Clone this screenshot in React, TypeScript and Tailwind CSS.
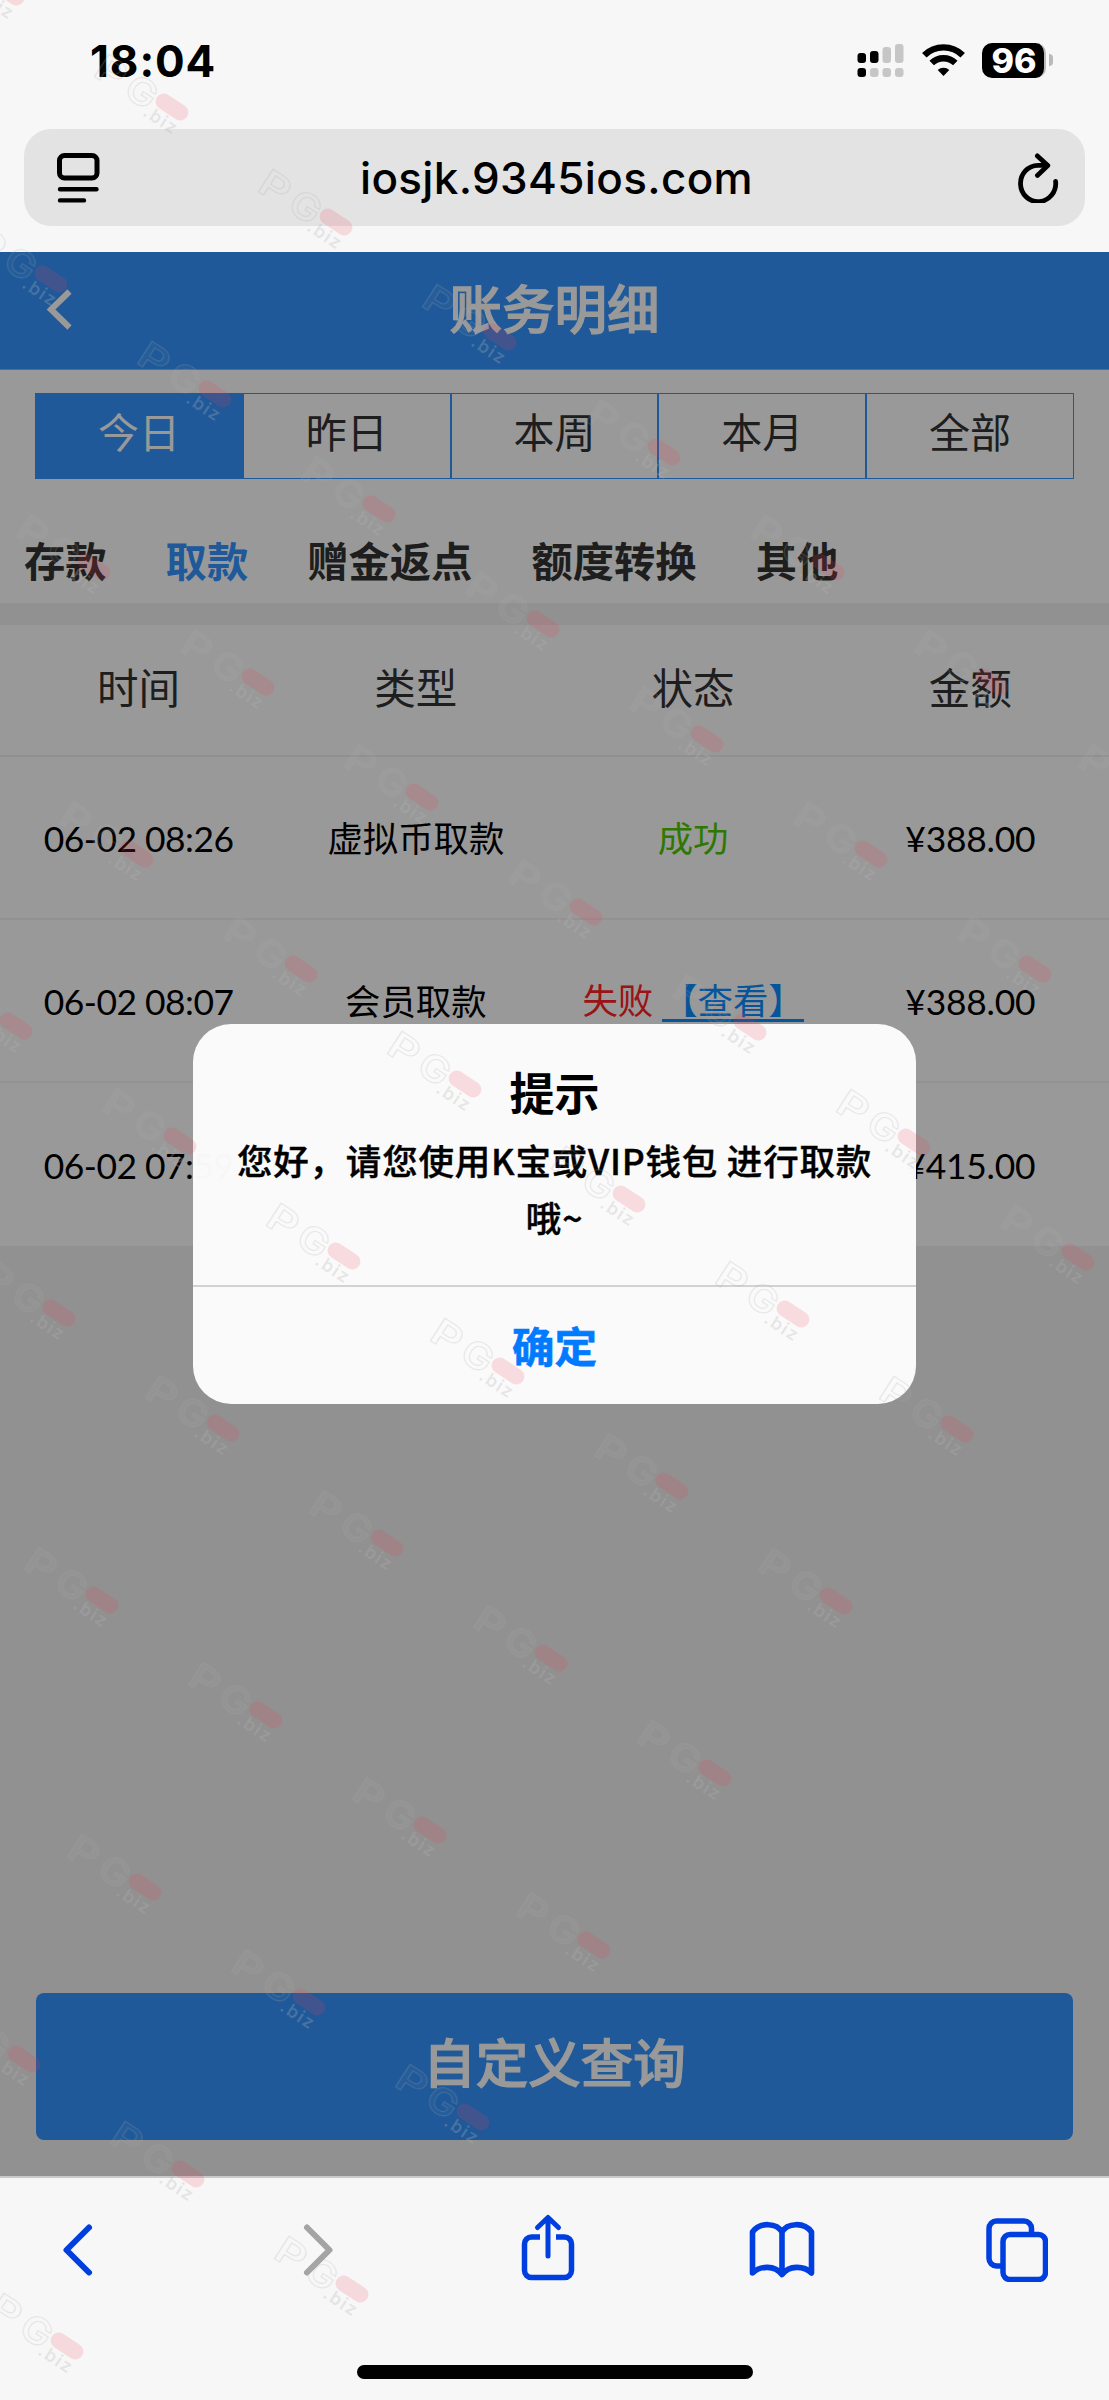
import { useState } from 'react'
import clsx from 'clsx'

const ranges = ['今日', '昨日', '本周', '本月', '全部']
const categories = ['存款', '取款', '赠金返点', '额度转换', '其他']
const columns = ['时间', '类型', '状态', '金额']

const records = [
  { time: '06-02 08:26', type: '虚拟币取款', ok: true, amount: '¥388.00' },
  { time: '06-02 08:07', type: '会员取款', ok: false, amount: '¥388.00' },
  { time: '06-02 07:59', type: '会员取款', ok: true, amount: '¥415.00' },
]

// first mark of every diagonal, and how many marks it holds
const markRows = [
  { x: 8, y: -8, count: 8 },
  { x: 51, y: 279, count: 7 },
  { x: 94, y: 567, count: 7 },
  { x: -27, y: 739, count: 7 },
  { x: 16, y: 1026, count: 6 },
  { x: 59, y: 1313, count: 5 },
  { x: 102, y: 1600, count: 4 },
  { x: -19, y: 1772, count: 4 },
  { x: 24, y: 2059, count: 3 },
  { x: 67, y: 2346, count: 1 },
]

function StatusBar() {
  return (
    <div className="flex h-[129px] items-start justify-between pl-[90px] pr-[56px] pt-[41px]">
      <span className="font-['Inter',sans-serif] text-[44px] font-bold leading-[40px] tracking-[0.9px]">18:04</span>
      <div className="flex pt-[2px]">
        <svg width="47" height="35" viewBox="0 0 47 35" className="mr-[18px]">
          <rect x="0.5" y="10" width="8.5" height="10" rx="3" />
          <rect x="13" y="8" width="8.5" height="12" rx="3" />
          <rect x="25.5" y="4" width="8.5" height="16" rx="3" fill="#c6c6c6" />
          <rect x="38" y="1" width="8.5" height="19" rx="3" fill="#c6c6c6" />
          <rect x="0.5" y="25" width="8.5" height="9" rx="3" />
          <rect x="13" y="25" width="8.5" height="9" rx="3" fill="#c6c6c6" />
          <rect x="25.5" y="25" width="8.5" height="9" rx="3" fill="#c6c6c6" />
          <rect x="38" y="25" width="8.5" height="9" rx="3" fill="#c6c6c6" />
        </svg>
        <svg width="43" height="35" viewBox="0 0 43 35" className="mr-[17px]" fill="none" stroke="#000" strokeWidth="6.4">
          <path d="M2.3 12.2a27.5 27.5 0 0 1 38.4 0" />
          <path d="M9.7 20a17 17 0 0 1 23.6 0" />
          <path d="M21.5 33l-5.8-5.9a8.3 8.3 0 0 1 11.6 0z" fill="#000" stroke="none" />
        </svg>
        <div className="flex h-[35px] w-[64px] items-center justify-center rounded-[10px] border-r-2 border-[#b9b9b9] bg-black">
          <span className="pl-[2px] font-['Inter',sans-serif] text-[34px] font-extrabold leading-[35px] text-white">96</span>
        </div>
        <div className="ml-[3px] mt-[11px] h-[12px] w-[4px] rounded-r-full bg-[#b9b9b9]" />
      </div>
    </div>
  )
}

function AddressBar() {
  return (
    <div className="mx-[24px] flex h-[97px] items-center justify-between rounded-[27px] bg-[#e3e3e3] pl-[33px] pr-[25px]">
      <svg width="43" height="50" viewBox="0 0 43 50" fill="none" stroke="#000" strokeWidth="5" strokeLinecap="round">
        <rect x="2.5" y="2.5" width="37.5" height="22.5" rx="5" />
        <path d="M3 36.2h36.5M3 47.4h24" strokeWidth="4.4" />
      </svg>
      <span className="pr-[1px] font-['Inter',sans-serif] text-[44px] font-medium tracking-[0.35px]">iosjk.9345ios.com</span>
      <svg width="46" height="50" viewBox="0 0 46 50" fill="none" stroke="#000" strokeWidth="4.8" strokeLinecap="round" strokeLinejoin="round">
        <path d="M41.6 28.4A17.6 18.2 0 1 1 24 12.3H33" />
        <path d="M23.4 2.9L33.8 12.6 23.4 22.4" />
      </svg>
    </div>
  )
}

function PageHeader() {
  return (
    <div className="relative flex h-[118px] items-center justify-center border-b border-[#7cb9ff] bg-[#3495ff]">
      <svg width="26" height="41" viewBox="0 0 26 41" className="absolute left-[46px] top-[37px]" fill="none" stroke="#fff" strokeWidth="6">
        <path d="M23.5 2.5L5 20.5 23.5 38.5" />
      </svg>
      <h1 className="pb-[8px] text-[52.5px] font-medium leading-none text-white [-webkit-text-stroke:1.2px_#fff]">账务明细</h1>
    </div>
  )
}

function RecordStatus({ ok }: { ok: boolean }) {
  if (ok) return <span className="text-[#4ec900]">成功</span>
  return (
    <span className="flex gap-[9px] whitespace-nowrap">
      <span className="text-[#ff2226]">失败</span>
      <span className="h-[40px] border-b-[3px] border-[#0a8cff] text-[#0a8cff]">【查看】</span>
    </span>
  )
}

function RecordTable() {
  return (
    <div className="bg-white">
      <div className="grid h-[132px] grid-cols-4 items-center border-b-2 border-[#f0f0f0] pb-[8px] text-center text-[41.5px] text-[#333]">
        {columns.map((c) => (
          <span key={c}>{c}</span>
        ))}
      </div>
      {records.map((r) => (
        <div
          key={r.time}
          className="grid h-[163px] grid-cols-4 items-center justify-items-center border-b-2 border-[#f4f4f4] pt-[2px] font-['Lato','Noto_Sans_CJK_SC',sans-serif] text-[35.4px] leading-[38px] last:border-b-0"
        >
          <span className="tracking-[-0.5px]">{r.time}</span>
          <span>{r.type}</span>
          <RecordStatus ok={r.ok} />
          <span className="tracking-[-0.2px]">{r.amount}</span>
        </div>
      ))}
    </div>
  )
}

function AlertDialog({ onClose }: { onClose: () => void }) {
  return (
    <div className="absolute inset-0 flex justify-center bg-black/40 pt-[772px]">
      <div className="flex h-[380px] w-[723px] flex-col rounded-[38px] bg-[#fcfcfc]/[0.98] text-center">
        <div className="flex-1 pt-[40px]">
          <h2 className="text-[45px] font-bold leading-[56px]">提示</h2>
          <p className="mt-[11px] whitespace-nowrap text-[35.5px] font-medium leading-[57px] tracking-[0.8px] [-webkit-text-stroke:0.4px_#000]">
            您好，请您使用K宝或VIP钱包 进行取款
            <br />
            哦~
          </p>
        </div>
        <button onClick={onClose} className="h-[119px] border-t-2 border-[#d2d2d2] pb-[2px] text-[42.5px] font-bold text-[#007aff] [-webkit-text-stroke:0.6px_#007aff]">
          确定
        </button>
      </div>
    </div>
  )
}

function Toolbar() {
  return (
    <div className="flex h-[224px] flex-col items-center border-t-2 border-[#c9c9cc]">
      <div className="flex w-full items-center pl-[62px] pt-[36px]">
        <svg width="32" height="66" viewBox="0 0 32 66" fill="none" stroke="#003fdf" strokeWidth="6" strokeLinecap="round" strokeLinejoin="round">
          <path d="M27 12.5L4.5 35 27 57.5" />
        </svg>
        <svg width="32" height="66" viewBox="0 0 32 66" className="ml-[208px]" fill="none" stroke="#a4a4a4" strokeWidth="6" strokeLinecap="round" strokeLinejoin="round">
          <path d="M5 12.5L27.5 35 5 57.5" />
        </svg>
        <svg width="54" height="68" viewBox="0 0 54 68" className="ml-[187px]" fill="none" stroke="#003fdf" strokeWidth="5.5" strokeLinecap="round" strokeLinejoin="round">
          <path strokeLinecap="butt" d="M19 23H10.5a7 7 0 0 0-7 7V56.5a7 7 0 0 0 7 7H43.5a7 7 0 0 0 7-7V30a7 7 0 0 0-7-7H35" />
          <path d="M27 42V4M16.5 13.5L27 3.5 37.5 13.5" strokeWidth="5" />
        </svg>
        <svg width="66" height="66" viewBox="0 0 66 66" className="ml-[174px]" fill="none" stroke="#003fdf" strokeWidth="5.6" strokeLinecap="round" strokeLinejoin="round">
          <path d="M33 17C28 8 11 6.5 3.5 17V58C11 50.5 26 50 33 59.5C40 50 55 50.5 62.5 58V17C55 6.5 38 8 33 17V59" />
        </svg>
        <svg width="64" height="68" viewBox="0 0 64 68" className="ml-[169px]" fill="none" stroke="#003fdf" strokeWidth="5.5">
          <path d="M17.5 52H12.5a7.5 7.5 0 0 1-7.5-7.5V14.5A7.5 7.5 0 0 1 12.5 7H40a7.5 7.5 0 0 1 7.5 7.5V20" />
          <rect x="19" y="20.5" width="42.5" height="45" rx="7" />
        </svg>
      </div>
      <div className="mt-[83px] h-[14px] w-[396px] rounded-full bg-black" />
    </div>
  )
}

function Watermarks() {
  const marks = markRows.flatMap((row) =>
    Array.from({ length: row.count }, (_, i) => ({ x: row.x + i * 164, y: row.y + i * 115 })),
  )
  return (
    <svg className="pointer-events-none absolute inset-0" width="1109" height="2400" fontFamily="Inter, sans-serif">
      {marks.map((m) => (
        <g key={`${m.x}-${m.y}`} transform={`translate(${m.x} ${m.y}) rotate(33)`}>
          <g fill="#fff" fillOpacity="0.03" stroke="#a8a8a8" strokeOpacity="0.22" strokeWidth="1.2" fontSize="37" fontWeight="600">
            <text transform="translate(-85 17) scale(1.25 1)">P</text>
            <text transform="translate(-49 17) scale(1.1 1)">G</text>
          </g>
          <text x="-21" y="23" fontSize="18" fontWeight="600" letterSpacing="1.5" fill="#b4b4b4" fillOpacity="0.28">.biz</text>
          <rect x="-18" y="-8" width="36" height="16" rx="8" fill="#f0405a" fillOpacity="0.16" />
        </g>
      ))}
    </svg>
  )
}

export default function App() {
  const [range, setRange] = useState('今日')
  const [category, setCategory] = useState('取款')
  const [showAlert, setShowAlert] = useState(true)

  return (
    <div className="relative h-[2400px] w-[1109px] overflow-hidden bg-[#f7f7f7] font-['Noto_Sans_CJK_SC',sans-serif] text-black">
      <StatusBar />
      <AddressBar />

      {/* web page */}
      <div className="relative mt-[26px] flex h-[1924px] flex-col bg-[#f2f2f2]">
        <PageHeader />
        <div className="h-[233px] bg-white pt-[23px]">
          <div className="mx-[35px] flex h-[86px] border border-[#3495ff]">
            {ranges.map((r) => (
              <button
                key={r}
                onClick={() => setRange(r)}
                className={clsx(
                  'flex-1 border-r-2 border-[#3495ff] pb-[11px] text-[41px] leading-none last:border-r-0',
                  r === range ? 'bg-[#3495ff] text-white' : 'text-[#333]',
                )}
              >
                {r}
              </button>
            ))}
          </div>
          <div className="flex gap-[59px] pl-[24px] pt-[58px] text-[41.3px] font-bold leading-[44px]">
            {categories.map((c) => (
              <button key={c} onClick={() => setCategory(c)} className={c === category ? 'text-[#3495ff]' : 'text-[#333]'}>
                {c}
              </button>
            ))}
          </div>
        </div>
        <div className="h-[22px]" />
        <RecordTable />
        <button
          onClick={() => setShowAlert(true)}
          className="mx-[36px] mb-[36px] mt-auto h-[147px] rounded-[8px] bg-[#3495ff] pb-[13px] text-[52.5px] font-medium leading-none text-white [-webkit-text-stroke:1.2px_#fff]"
        >
          自定义查询
        </button>
        {showAlert && <AlertDialog onClose={() => setShowAlert(false)} />}
      </div>

      <Toolbar />
      <Watermarks />
    </div>
  )
}
